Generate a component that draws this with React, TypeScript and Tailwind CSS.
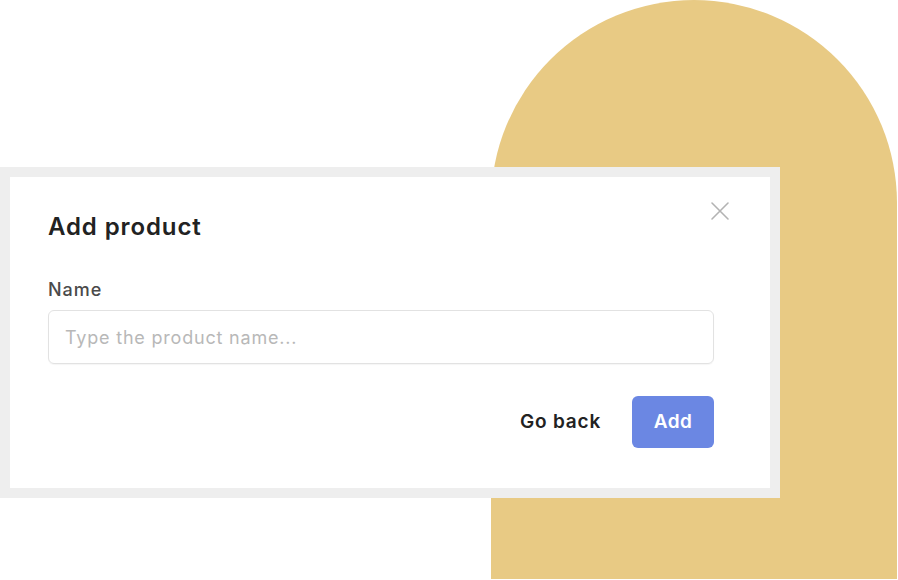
import React from "react";

export default function App() {
  return (
    <div className="relative w-[898px] h-[580px] overflow-hidden bg-white font-['Inter',_sans-serif]">
      {/* decorative arch behind the dialog */}
      <div className="absolute left-[491px] top-0 w-[406px] h-[579px] rounded-t-full bg-[#e8ca84]" />

      <div className="relative pt-[167px]">
        <div className="w-[780px] border-[10px] border-[#eeeeee] bg-white">
          <div className="relative px-[38px] pt-[35px] pb-[40px]">
            <button className="absolute right-[40px] top-[24px] text-[#b3b3b3]">
              <svg width="20" height="20" viewBox="0 0 20 20" fill="none">
                <path
                  d="M2 2L18 18M18 2L2 18"
                  stroke="currentColor"
                  strokeWidth="1.6"
                  strokeLinecap="round"
                />
              </svg>
            </button>

            <h2 className="text-[24px] font-semibold text-[#222222] leading-[30px] tracking-[0.9px]">
              Add product
            </h2>

            <label className="block mt-[37px] text-[18px] font-medium text-[#4a4a4a] leading-[22px] tracking-[1px]">
              Name
            </label>
            <input
              className="mt-[9px] w-[666px] h-[54px] rounded-[6px] border border-[#e2e2e2] px-[16px] text-[18px] tracking-[0.8px] text-[#333] placeholder:text-[#b8b8b8] outline-none shadow-[0_1px_1px_rgba(0,0,0,0.04)]"
              placeholder="Type the product name..."
            />

            <div className="mt-[32px] flex w-[666px] items-center justify-end gap-[31px]">
              <button className="text-[19px] font-semibold tracking-[0.8px] text-[#222222]">
                Go back
              </button>
              <button className="w-[82px] h-[52px] rounded-[6px] bg-[#6b87e3] text-[19px] font-semibold tracking-[0.5px] text-white">
                Add
              </button>
            </div>
          </div>
        </div>
      </div>
    </div>
  );
}
